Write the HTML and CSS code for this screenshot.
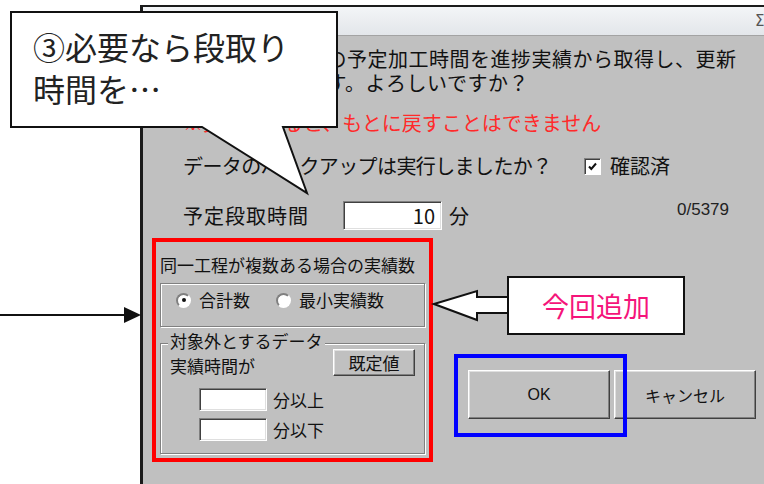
FILE: index.html
```html
<!DOCTYPE html>
<html lang="ja">
<head>
    <meta charset="UTF-8">
    <title>予定加工時間の更新</title>
    <link rel="stylesheet" href="styles.css">
</head>
<body>
    <div class="dialog">
        <div class="titlebar">
            <span class="app-icon"></span>
            <span class="close">Σ</span>
        </div>
        <div class="content">
            <p class="msg">選択された工程の予定加工時間を進捗実績から取得し、更新<br>設定を変更します。よろしいですか？</p>
            <p class="warn">※更新をすると、もとに戻すことはできません</p>
            <div class="row backup">
                <span class="question">データのバックアップは実行しましたか？</span>
                <label class="check">
                    <span class="box">
                        <svg width="11" height="11" viewBox="0 0 11 11"><path d="M2 5.5 L4.3 8 L9 2.5" fill="none" stroke="#111" stroke-width="2"/></svg>
                    </span>
                    確認済
                </label>
            </div>
            <div class="row setup">
                <span class="label">予定段取時間</span>
                <span class="field num">10</span>
                <span class="unit">分</span>
                <span class="count">0/5379</span>
            </div>
            <div class="lower">
                <div class="options">
                    <div class="opt-title">同一工程が複数ある場合の実績数</div>
                    <div class="frame radios">
                        <label class="radio"><span class="dot on"></span>合計数</label>
                        <label class="radio"><span class="dot"></span>最小実績数</label>
                    </div>
                    <div class="frame excl">
                        <span class="legend">対象外とするデータ</span>
                        <div class="excl-head">
                            <span>実績時間が</span>
                            <button class="btn small">既定値</button>
                        </div>
                        <div class="limit"><span class="field"></span>分以上</div>
                        <div class="limit"><span class="field"></span>分以下</div>
                    </div>
                </div>
                <div class="buttons">
                    <button class="btn big ok">OK</button>
                    <button class="btn big">キャンセル</button>
                </div>
            </div>
        </div>
    </div>

    <!-- annotations drawn over the screenshot -->
    <div class="callout">
        <svg class="callout-shape" width="330" height="186" viewBox="0 0 330 186">
            <path d="M1 1 H327 V116 H273 L297 182 L192 116 H1 Z" fill="#fff" stroke="#111" stroke-width="2"/>
        </svg>
        <div class="callout-text">③必要なら段取り<br>時間を…</div>
    </div>

    <svg class="pointer" width="142" height="20" viewBox="0 0 142 20">
        <line x1="0" y1="10" x2="126" y2="10" stroke="#111" stroke-width="2"/>
        <path d="M124 2 L141 10 L124 18 Z" fill="#111"/>
    </svg>

    <svg class="tag-arrow" width="84" height="38" viewBox="0 0 84 38">
        <path d="M4 17 L47 4 L47 10 L80 10 L80 26 L47 26 L47 33 Z" fill="#fff" stroke="#111" stroke-width="2" stroke-linejoin="miter"/>
    </svg>
    <div class="tag">今回追加</div>

    <div class="focus"></div>
</body>
</html>
```

FILE: styles.css
```css
* { box-sizing: border-box; }
html, body { margin: 0; }
body { width: 764px; height: 484px; overflow: hidden; position: relative; background: #fff; font-family: "Noto Sans CJK JP", "Noto Sans", sans-serif; color: #111; }

/* dialog */
.dialog { margin: 5px 0 0 140px; width: 630px; height: 479px; border-top: 2px solid #1b1b1b; border-left: 3px solid #1b1b1b; background: #c0c0c0; display: flex; flex-direction: column; overflow: hidden; }
.titlebar { height: 29px; flex: none; display: flex; align-items: center; background: linear-gradient(#f3f5f7, #e3e6ea); border-bottom: 1px solid #a3a3a3; }
.app-icon { width: 23px; height: 16px; margin-left: 4px; background: #f2b6cc; border-radius: 2px; }
.close { margin-left: 585px; font: 15px "DejaVu Sans", sans-serif; color: #555; }
.content { flex: 1; font-size: 20px; line-height: 24px; }
.msg { margin: 11px 0 0; padding-left: 40px; white-space: nowrap; letter-spacing: 0.5px; }
.warn { margin: 16px 0 0; padding-left: 40px; color: #ff2a2a; white-space: nowrap; }
.row { display: flex; align-items: center; padding-left: 40px; white-space: nowrap; }
.backup { margin-top: 19px; }
.question { flex: 0 0 401px; letter-spacing: -0.6px; }
.check { display: flex; align-items: center; gap: 9px; }
.box { width: 17px; height: 17px; display: grid; place-items: center; background: #fff; border: 1px solid; border-color: #808080 #fff #fff #808080; box-shadow: inset 1px 1px #404040; }
.box svg { display: block; }
.setup { margin-top: 23px; }
.label { flex: 0 0 160px; letter-spacing: 1px; }
.field { display: block; background: #fff; border: 1px solid; border-color: #808080 #fff #fff #808080; box-shadow: inset 1px 1px #404040, inset -1px -1px #dfdfdf; }
.num { width: 99px; height: 29px; text-align: right; padding-right: 6px; line-height: 27px; }
.unit { margin-left: 7px; }
.count { align-self: flex-start; margin-left: 208px; font: 17px/17px "Liberation Sans", sans-serif; color: #222; }

/* lower part: options + buttons */
.lower { display: flex; margin: 8px 0 0 9px; }
.options { width: 281px; height: 224px; border: 4px solid #ff0000; padding: 13px 4px 0; font-size: 17px; line-height: 20px; }
.opt-title { white-space: nowrap; }
.frame { border: 1px solid #808080; box-shadow: inset 1px 1px #fff, 1px 1px #fff; }
.radios { height: 44px; margin-top: 8px; display: flex; align-items: flex-start; padding: 6px 0 0 15px; }
.radio { display: flex; align-items: center; gap: 8px; }
.radio + .radio { margin-left: 26px; }
.dot { width: 15px; height: 15px; border-radius: 50%; background: #fff; border: 2px solid; border-color: #808080 #fff #fff #808080; display: grid; place-items: center; }
.dot.on::after { content: ""; width: 4px; height: 4px; border-radius: 50%; background: #111; }
.excl { position: relative; height: 111px; margin-top: 16px; padding: 5px 9px 0; }
.legend { position: absolute; top: -13px; left: 7px; padding: 0 2px; background: #c0c0c0; white-space: nowrap; }
.excl-head { display: flex; justify-content: space-between; align-items: flex-end; }
.limit { display: flex; align-items: center; gap: 6px; padding-left: 29px; margin-top: 7px; }
.excl-head + .limit { margin-top: 12px; }
.limit .field { width: 68px; height: 23px; }

.btn { background: #c0c0c0; border: 1px solid; border-color: #fff #404040 #404040 #fff; box-shadow: inset -1px -1px #808080, inset 1px 1px #dfdfdf; font-family: "Noto Sans CJK JP", sans-serif; color: #111; padding: 0; }
.btn.small { width: 82px; height: 27px; font-size: 17px; line-height: 20px; }
.buttons { display: flex; gap: 4px; margin: 132px 0 0 35px; align-self: flex-start; }
.btn.big { width: 142px; height: 49px; font-size: 16px; }
.btn.ok { font-family: "Liberation Sans", sans-serif; }

/* annotations */
.callout { position: absolute; left: 10px; top: 11px; width: 328px; height: 117px; }
.callout-shape { position: absolute; left: 0; top: 0; }
.callout-text { position: relative; padding: 14px 0 0 23px; font-size: 32px; line-height: 42px; color: #222; white-space: nowrap; }
.pointer { position: absolute; left: 0; top: 305px; }
.tag-arrow { position: absolute; left: 430px; top: 287px; }
.tag { position: absolute; left: 507px; top: 276px; width: 178px; height: 59px; background: #fff; border: 2px solid #111; display: grid; place-items: center; font-size: 27px; color: #f5147a; }
.focus { position: absolute; left: 454px; top: 354px; width: 173px; height: 83px; border: 4px solid #0000ff; }
```
